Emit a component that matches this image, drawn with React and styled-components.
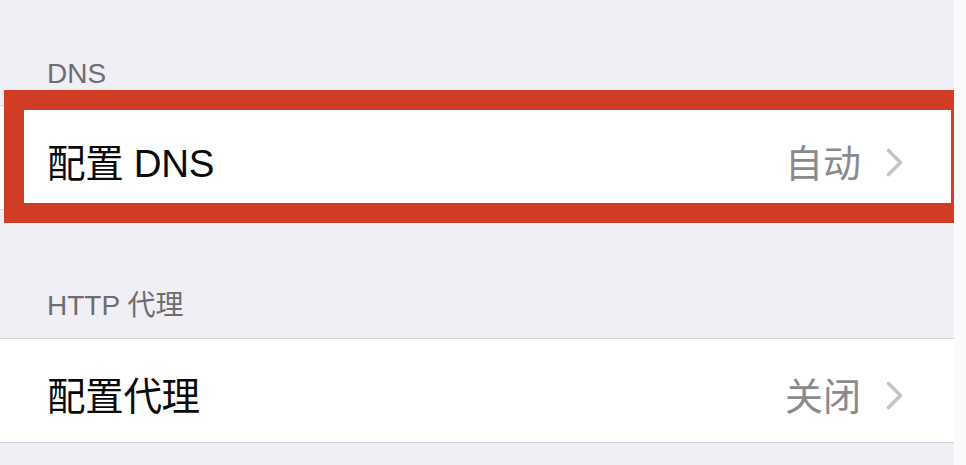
import React from "react";
import styled, { createGlobalStyle } from "styled-components";

const GlobalStyle = createGlobalStyle`
  html, body {
    margin: 0;
    padding: 0;
    background: #f0eff5;
  }
  body {
    font-family: "Liberation Sans", "Noto Sans CJK SC", sans-serif;
    -webkit-font-smoothing: antialiased;
  }
  * { box-sizing: border-box; }
`;

const Screen = styled.div`
  display: flex;
  width: 966px;
  height: 465px;
  overflow: hidden;
  background: #f0eff5;
`;

const Content = styled.div`
  width: 954px;
  display: flex;
  flex-direction: column;
`;

const EdgeStrip = styled.div`
  flex: 1;
  background: #fafafc;
`;

const SectionHeader = styled.div`
  padding: ${(p) => p.$top}px 0 ${(p) => p.$bottom}px 47px;
  font-size: 28px;
  line-height: 32px;
  color: #6d6d72;
  white-space: nowrap;
`;

const Row = styled.div`
  position: relative;
  display: flex;
  align-items: center;
  background: #ffffff;
  border-top: 1px solid #d6d6da;
  border-bottom: 1px solid #d6d6da;
  padding: 35px 51px 22px 47px;
`;

const Label = styled.span`
  flex: 1;
  font-size: 38.5px;
  line-height: 46px;
  color: #0a0a0a;
  white-space: nowrap;
  letter-spacing: -0.3px;
`;

const Value = styled.span`
  font-size: 38px;
  line-height: 46px;
  color: #8a8a8e;
  margin-right: 25px;
  white-space: nowrap;
`;

const Chevron = styled.svg`
  width: 17px;
  height: 29px;
  flex: none;
  margin-top: -4px;
`;

const Highlight = styled.div`
  position: absolute;
  left: 4px;
  top: -16px;
  width: 950px;
  height: 133px;
  border-style: solid;
  border-color: #d13c25;
  border-width: 20px 3px 20px 20px;
  pointer-events: none;
`;

const ChevronIcon = () => (
  <Chevron viewBox="0 0 17 29">
    <polyline
      points="2.5,2.5 14.5,14.5 2.5,26.5"
      fill="none"
      stroke="#c4c4c8"
      strokeWidth="3.6"
      strokeLinecap="round"
      strokeLinejoin="round"
    />
  </Chevron>
);

const SettingRow = ({ label, value, highlighted }) => (
  <Row>
    <Label>{label}</Label>
    <Value>{value}</Value>
    <ChevronIcon />
    {highlighted && <Highlight />}
  </Row>
);

export default function App() {
  return (
    <>
      <GlobalStyle />
      <Screen>
        <Content>
          <SectionHeader $top={58} $bottom={15}>DNS</SectionHeader>
          <SettingRow label="配置 DNS" value="自动" highlighted />
          <SectionHeader $top={80} $bottom={16}>HTTP 代理</SectionHeader>
          <SettingRow label="配置代理" value="关闭" />
        </Content>
        <EdgeStrip />
      </Screen>
    </>
  );
}
